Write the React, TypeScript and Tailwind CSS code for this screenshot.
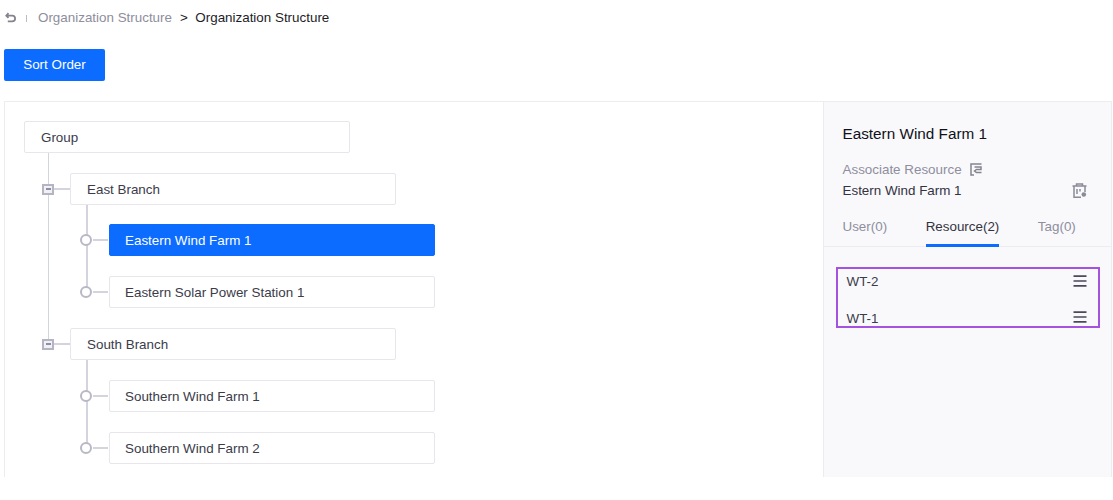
import React from "react";

const font = "font-['Liberation_Sans',Arial,sans-serif]";

const Node: React.FC<{ label: string; active?: boolean; leaf?: boolean }> = ({ label, active, leaf }) => (
  <div
    className={`flex h-[32px] w-[326px] items-center rounded-[2px] border pt-[2px] text-[13.4px] ${leaf ? "pl-[15px]" : "pl-[16px]"} ${
      active ? "border-[#0b6cff] bg-[#0b6cff] text-white" : "border-[#e6e6ec] bg-white text-[#3b3b4a]"
    }`}
  >
    {label}
  </div>
);

const Branch: React.FC<{ label: string }> = ({ label }) => (
  <div className="relative flex items-center">
    <div className="relative z-10 flex h-[11px] w-[12px] items-center justify-center border-2 border-[#b4b4c3] bg-[#f0f0f5]">
      <div className="h-[1.5px] w-[5px] bg-[#8e8ea0]" />
    </div>
    <div className="h-[1.5px] w-[16px] bg-[#d4d4de]" />
    <Node label={label} />
  </div>
);

const Leaf: React.FC<{ label: string; active?: boolean }> = ({ label, active }) => (
  <div className="relative flex items-center">
    <div className="relative z-10 h-[12px] w-[12px] rounded-full border-2 border-[#b8b8c6] bg-white" />
    <div className="ml-px h-[1.5px] w-[15px] bg-[#d4d4de]" />
    <div className="ml-px">
      <Node label={label} active={active} leaf />
    </div>
  </div>
);

const Lines: React.FC<{ className?: string }> = ({ className }) => (
  <svg width="14" height="12" viewBox="0 0 14 12" fill="none" stroke="#4a4a58" strokeWidth="1.7" className={className}>
    <path d="M0.5 1.2h13M0.5 6h13M0.5 10.8h13" />
  </svg>
);

export default function App() {
  return (
    <div className={`${font} h-[500px] w-[1113px] overflow-hidden bg-white`}>
      <div className="flex h-[49px] items-start pl-[5px] pt-[8px] text-[13.4px]">
        <div className="flex h-[18px] items-center">
          <svg width="12" height="12" viewBox="0 0 12 12" fill="none" stroke="#84848f" strokeWidth="1.8" className="mt-[2px]">
            <path d="M3.5 1.2 1.3 3.6l2.2 2.2M1.5 3.6h5.7a2.9 2.9 0 0 1 0 5.8H2.8" />
          </svg>
          <div className="ml-[9px] mt-[3px] h-[7px] w-px bg-[#bcbcc6]" />
          <span className="ml-[11px] mt-[2px] text-[#8e8e9c]">Organization Structure</span>
          <span className="ml-[8px] mt-[2px] text-[#1d1d28]">&gt;</span>
          <span className="ml-[7.5px] mt-[2px] text-[#1d1d28]">Organization Structure</span>
        </div>
      </div>

      <button className="ml-[4px] flex h-[32px] w-[101px] items-center justify-center rounded-[2px] bg-[#0b6cff] pt-px text-[13.4px] text-white">
        Sort Order
      </button>

      <div className="ml-[4px] mt-[20px] flex h-[376px] w-[1108px] border-x border-t border-[#ececf1]">
        <div className="flex-1 pl-[19px] pt-[19px]">
          <Node label="Group" />
          <div className="relative ml-[18px] mt-[20px]">
            <div className="absolute left-[5.5px] top-[-20px] h-[190px] w-[1.5px] bg-[#d4d4de]" />
            <Branch label="East Branch" />
            <div className="relative ml-[38px] mt-[19px]">
              <div className="absolute left-[6px] top-[-19px] h-[85px] w-[1.5px] bg-[#d4d4de]" />
              <Leaf label="Eastern Wind Farm 1" active />
              <div className="mt-[20px]">
                <Leaf label="Eastern Solar Power Station 1" />
              </div>
            </div>
            <div className="mt-[20px]">
              <Branch label="South Branch" />
            </div>
            <div className="relative ml-[38px] mt-[20px]">
              <div className="absolute left-[6px] top-[-20px] h-[85px] w-[1.5px] bg-[#d4d4de]" />
              <Leaf label="Southern Wind Farm 1" />
              <div className="mt-[20px]">
                <Leaf label="Southern Wind Farm 2" />
              </div>
            </div>
          </div>
        </div>

        <div className="w-[288px] border-l border-[#ececf1] bg-[#f9f9fc]">
          <div className="pl-[18.5px] pr-[19px] pt-[21px]">
            <div className="text-[15.3px] leading-[22px] text-[#111118]">Eastern Wind Farm 1</div>
            <div className="mt-[14px] flex h-[20px] items-center text-[13.4px] leading-[20px] text-[#8e8e9c]">
              <span className="mt-px">Associate Resource</span>
              <svg width="12" height="13" viewBox="0 0 12 13" fill="none" stroke="#84848f" strokeWidth="1.5" className="ml-[8px]">
                <path d="M11.5 1H1v11h3M4.5 4H11v2.5H6.5L4.5 8l2 1.6H11.5" />
              </svg>
            </div>
            <div className="mt-px flex h-[20px] items-center justify-between text-[13.4px] leading-[20px] text-[#33333f]">
              <span className="mt-px">Estern Wind Farm 1</span>
              <svg width="15" height="15" viewBox="0 0 15 15" fill="none" stroke="#8a8a98" strokeWidth="1.5" className="mr-[5px]">
                <path d="M4.5 2.5V1h6v1.5M0.5 3h14M2 3v11.2h7M13 3v6" />
                <path d="M5 6v5M8 6v2.5" />
                <circle cx="11.8" cy="11.5" r="2.3" fill="#8a8a98" stroke="none" />
              </svg>
            </div>
          </div>
          <div className="mt-[15px] flex h-[32px] border-b border-[#ececf1] pl-[18.5px] text-[13.4px] text-[#8e8e9c]">
            <div className="pt-[2px]">User(0)</div>
            <div className="ml-[38.5px] h-[32px] border-b-[3px] border-[#0b6cff] pt-[2px] text-[#33333f]">Resource(2)</div>
            <div className="ml-[38.5px] pt-[2px]">Tag(0)</div>
          </div>
          <div className="ml-[12px] mt-[20px] h-[61px] w-[264px] overflow-hidden border-2 border-[#a652e0] pl-[8.5px] pr-[11px] text-[13.4px] text-[#3b3b4a]">
            <div className="flex h-[24px] items-center justify-between">
              <span className="mt-[2px]">WT-2</span>
              <Lines className="-mt-px" />
            </div>
            <div className="mt-[12px] flex h-[26px] items-center justify-between">
              <span className="mt-[2px]">WT-1</span>
              <Lines className="-mt-[3px]" />
            </div>
          </div>
        </div>
      </div>
    </div>
  );
}
